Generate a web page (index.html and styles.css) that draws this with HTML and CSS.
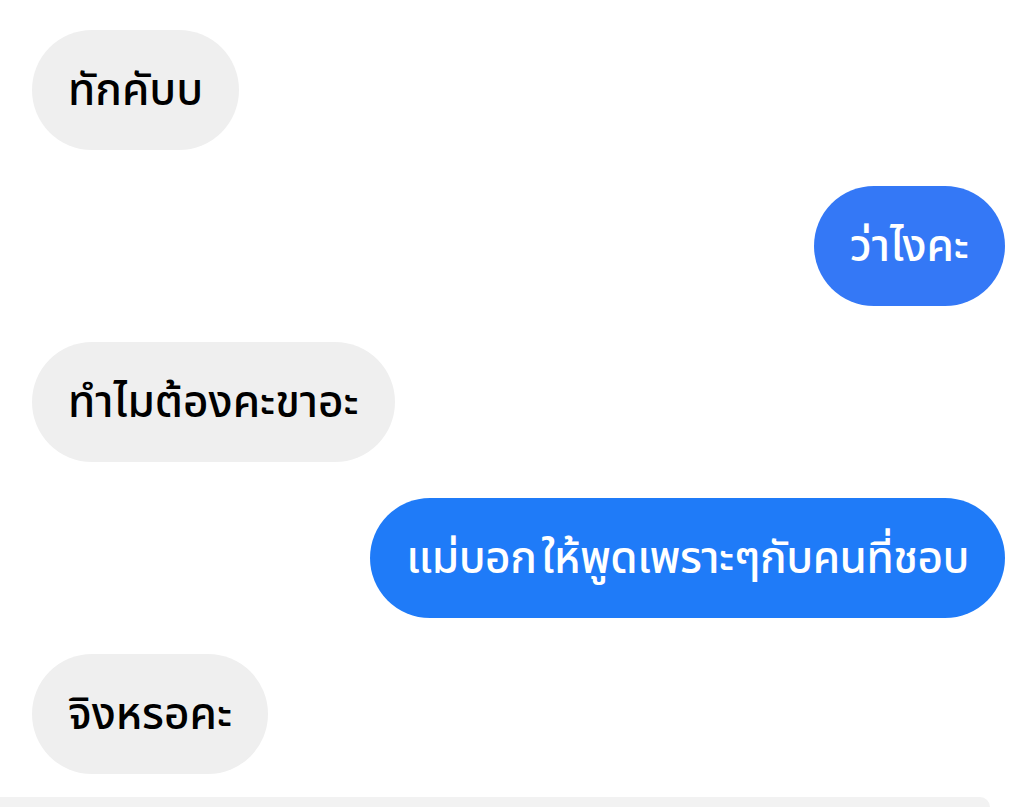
FILE: index.html
```html
<!DOCTYPE html>
<html lang="th">
<head>
<meta charset="utf-8">
<link rel="stylesheet" href="styles.css">
</head>
<body>
<div class="chat">
  <div class="row left"><div class="bubble in">ทักคับบ</div></div>
  <div class="row right"><div class="bubble out out1">ว่าไงคะ</div></div>
  <div class="row left"><div class="bubble in">ทำไมต้องคะขาอะ</div></div>
  <div class="row right"><div class="bubble out out2">แม่บอก ให้พูดเพราะๆกับคนที่ชอบ</div></div>
  <div class="row left"><div class="bubble in">จิงหรอคะ</div></div>
</div>
<div class="composer"></div>
</body>
</html>
```
FILE: styles.css
```css
html, body {
  margin: 0;
  padding: 0;
  background: #ffffff;
  overflow: hidden;
}
body {
  width: 1034px;
  height: 807px;
  font-family: "Noto Sans Thai", "Noto Sans", sans-serif;
}
.chat {
  display: flex;
  flex-direction: column;
  gap: 36px;
  padding: 30px 29px 0 32px;
}
.row {
  display: flex;
}
.row.right {
  justify-content: flex-end;
}
.bubble {
  height: 120px;
  box-sizing: border-box;
  border-radius: 60px;
  padding: 2px 36px 0;
  display: flex;
  align-items: center;
  font-size: 44px;
  font-weight: 500;
  white-space: nowrap;
}
.in {
  background: #efefef;
  color: #000;
}
.out {
  color: #fff;
}
.out1 {
  background: #3478f6;
}
.out2 {
  background: #1f7bf8;
  word-spacing: -6px;
  letter-spacing: -0.5px;
}
.composer {
  margin-top: 23px;
  width: 990px;
  height: 10px;
  background: #f2f2f2;
  border-top-right-radius: 30px;
}
```
